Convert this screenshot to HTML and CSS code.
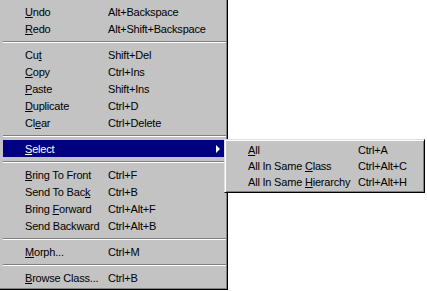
FILE: index.html
```html
<!DOCTYPE html>
<html>
<head>
<meta charset="utf-8">
<link rel="stylesheet" href="styles.css">
</head>
<body>
<div class="menu">
  <div class="item"><span><u>U</u>ndo</span><span>Alt+Backspace</span></div>
  <div class="item"><span><u>R</u>edo</span><span>Alt+Shift+Backspace</span></div>
  <div class="sep"></div>
  <div class="item"><span>Cu<u>t</u></span><span>Shift+Del</span></div>
  <div class="item"><span><u>C</u>opy</span><span>Ctrl+Ins</span></div>
  <div class="item"><span><u>P</u>aste</span><span>Shift+Ins</span></div>
  <div class="item"><span><u>D</u>uplicate</span><span>Ctrl+D</span></div>
  <div class="item"><span>Cl<u>e</u>ar</span><span>Ctrl+Delete</span></div>
  <div class="sep"></div>
  <div class="item active"><span><u>S</u>elect</span><span></span><i class="arrow"></i></div>
  <div class="sep"></div>
  <div class="item"><span><u>B</u>ring To Front</span><span>Ctrl+F</span></div>
  <div class="item"><span>Send To Bac<u>k</u></span><span>Ctrl+B</span></div>
  <div class="item"><span>Bring <u>F</u>orward</span><span>Ctrl+Alt+F</span></div>
  <div class="item"><span>Send Backward</span><span>Ctrl+Alt+B</span></div>
  <div class="sep"></div>
  <div class="item"><span><u>M</u>orph...</span><span>Ctrl+M</span></div>
  <div class="sep"></div>
  <div class="item"><span><u>B</u>rowse Class...</span><span>Ctrl+B</span></div>
</div>
<div class="submenu">
  <div class="item sub"><span><u>A</u>ll</span><span>Ctrl+A</span></div>
  <div class="item sub"><span>All In Same <u>C</u>lass</span><span>Ctrl+Alt+C</span></div>
  <div class="item sub"><span>All In Same <u>H</u>ierarchy</span><span>Ctrl+Alt+H</span></div>
</div>
</body>
</html>
```
FILE: styles.css
```css
html, body {
  margin: 0;
  padding: 0;
  background: #ffffff;
}
body {
  position: relative;
  width: 427px;
  height: 291px;
  overflow: hidden;
  font-family: "Liberation Sans", Arial, sans-serif;
  font-size: 11px;
  letter-spacing: -0.2px;
  color: #000;
}
.menu {
  box-sizing: border-box;
  width: 228px;
  height: 290px;
  background: #c3c3c3;
  padding: 3px 1px 2px 3px;
  border-right: 1px solid #000;
  border-bottom: 1px solid #000;
  box-shadow: inset -1px -1px 0 #808080;
}
.item {
  position: relative;
  box-sizing: border-box;
  height: 17px;
  padding-top: 1px;
  display: grid;
  grid-template-columns: 83px 1fr;
  align-items: center;
  padding-left: 22px;
  white-space: nowrap;
  line-height: 16px;
}
.item u {
  text-decoration: underline;
  text-underline-offset: 1px;
}
.active {
  background: #000080;
  color: #fff;
}
.arrow {
  position: absolute;
  right: 6px;
  top: 5px;
  width: 0;
  height: 0;
  border-top: 4px solid transparent;
  border-bottom: 4px solid transparent;
  border-left: 4px solid #fff;
}
.sep {
  height: 9px;
  display: flex;
  flex-direction: column;
  justify-content: center;
}
.sep::before {
  content: "";
  display: block;
  height: 1px;
  background: #808080;
  border-bottom: 1px solid #fff;
}
.submenu {
  position: absolute;
  left: 224px;
  top: 139px;
  box-sizing: border-box;
  width: 201px;
  height: 54px;
  background: #c3c3c3;
  border-top: 1px solid #dfdfdf;
  border-left: 1px solid #dfdfdf;
  border-right: 1px solid #000;
  border-bottom: 1px solid #000;
  box-shadow: inset 1px 1px 0 #fff, inset -1px -1px 0 #808080;
  padding: 2px;
}
.item.sub {
  height: 16px;
  line-height: 15px;
  padding-left: 21px;
  grid-template-columns: 110px 1fr;
}
```
